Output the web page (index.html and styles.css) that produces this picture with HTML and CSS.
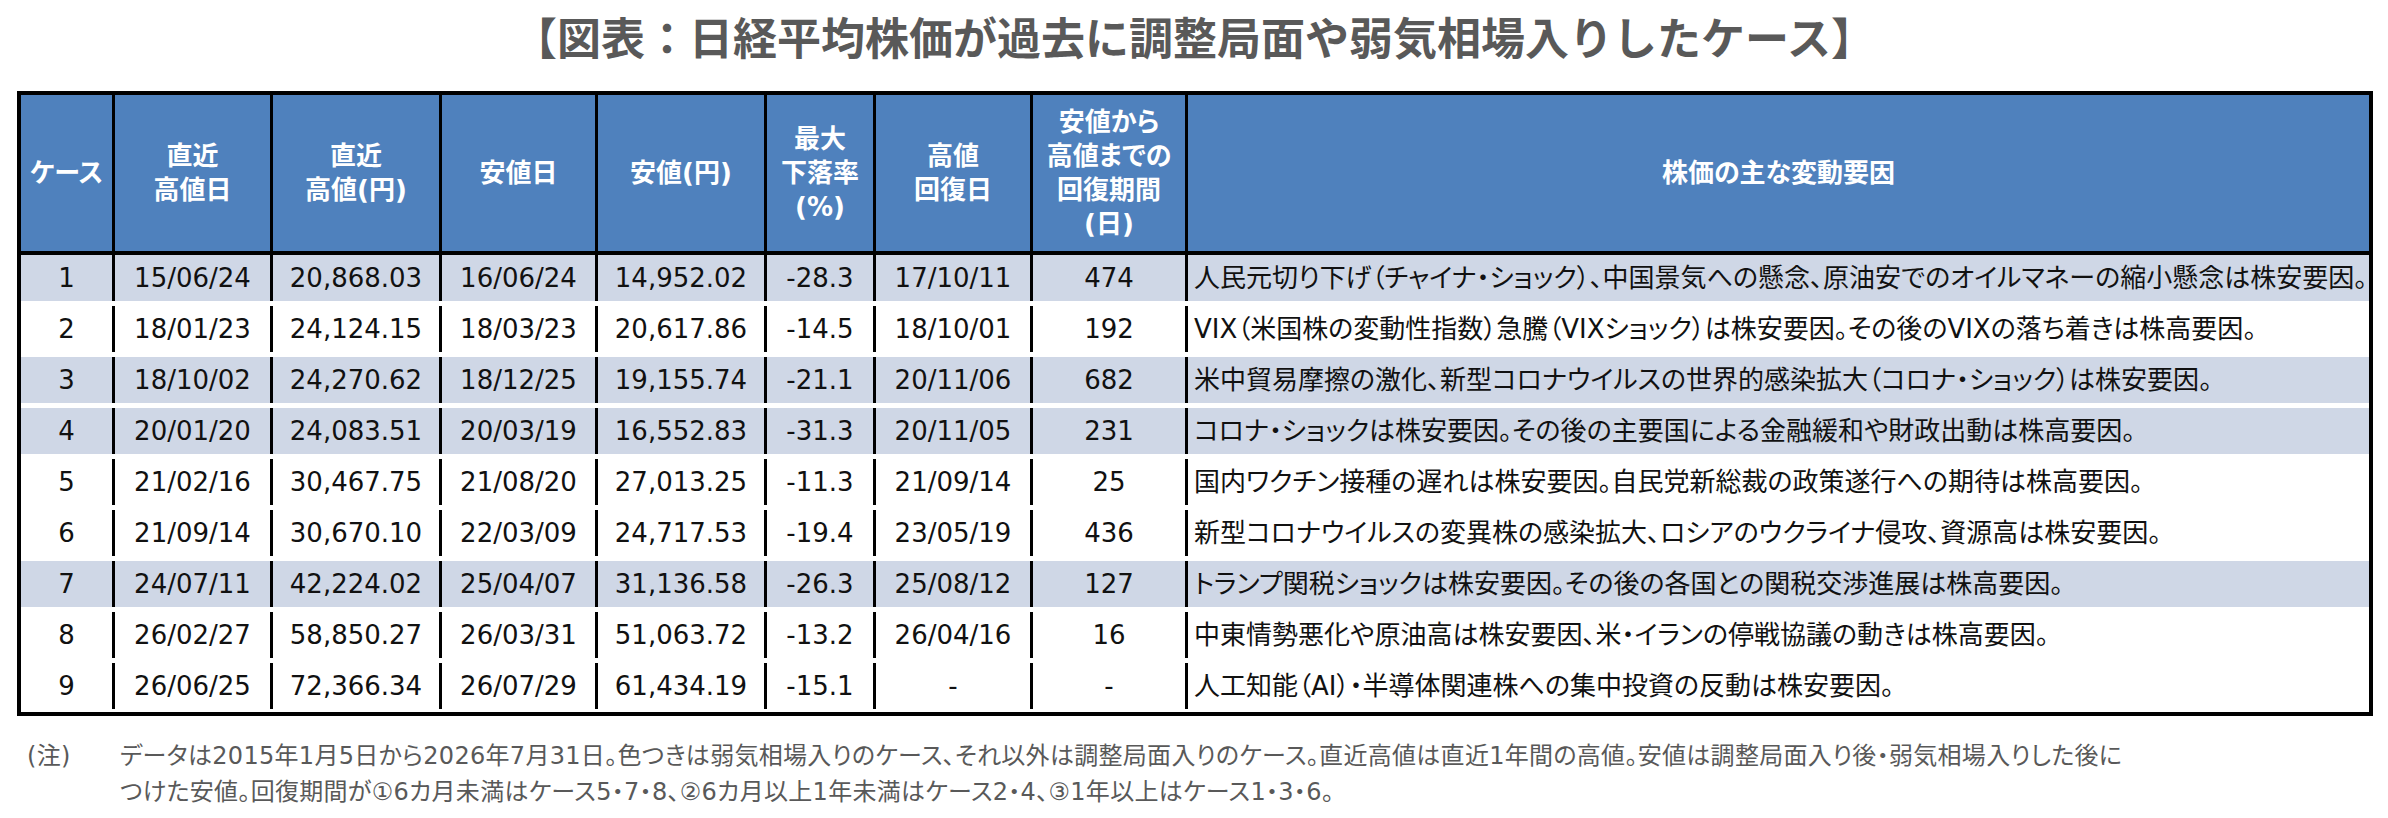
FILE: index.html
```html
<!DOCTYPE html>
<html lang="ja">
<head>
<meta charset="utf-8">
<title>日経平均株価が過去に調整局面や弱気相場入りしたケース</title>
<link rel="stylesheet" href="styles.css">
</head>
<body>
<div class="page">
  <h1 class="title">【図表：日経平均株価が過去に調整局面や弱気相場入りしたケース】</h1>
  <div class="table">
    <div class="row head">
      <div class="cell">ケース</div>
      <div class="cell">直近<br>高値日</div>
      <div class="cell">直近<br>高値(円)</div>
      <div class="cell">安値日</div>
      <div class="cell">安値(円)</div>
      <div class="cell">最大<br>下落率<br>(%)</div>
      <div class="cell">高値<br>回復日</div>
      <div class="cell">安値から<br>高値までの<br>回復期間<br>(日)</div>
      <div class="cell">株価の主な変動要因</div>
    </div>
    <div class="body">
      <div class="row band">
        <div class="cell">1</div><div class="cell">15/06/24</div><div class="cell">20,868.03</div><div class="cell">16/06/24</div><div class="cell">14,952.02</div><div class="cell">-28.3</div><div class="cell">17/10/11</div><div class="cell">474</div>
        <div class="cell desc">人民元切り下げ（チャイナ・ショック）、中国景気への懸念、原油安でのオイルマネーの縮小懸念は株安要因。</div>
      </div>
      <div class="row">
        <div class="cell">2</div><div class="cell">18/01/23</div><div class="cell">24,124.15</div><div class="cell">18/03/23</div><div class="cell">20,617.86</div><div class="cell">-14.5</div><div class="cell">18/10/01</div><div class="cell">192</div>
        <div class="cell desc">VIX（米国株の変動性指数）急騰（VIXショック）は株安要因。その後のVIXの落ち着きは株高要因。</div>
      </div>
      <div class="row band">
        <div class="cell">3</div><div class="cell">18/10/02</div><div class="cell">24,270.62</div><div class="cell">18/12/25</div><div class="cell">19,155.74</div><div class="cell">-21.1</div><div class="cell">20/11/06</div><div class="cell">682</div>
        <div class="cell desc">米中貿易摩擦の激化、新型コロナウイルスの世界的感染拡大（コロナ・ショック）は株安要因。</div>
      </div>
      <div class="row band">
        <div class="cell">4</div><div class="cell">20/01/20</div><div class="cell">24,083.51</div><div class="cell">20/03/19</div><div class="cell">16,552.83</div><div class="cell">-31.3</div><div class="cell">20/11/05</div><div class="cell">231</div>
        <div class="cell desc">コロナ・ショックは株安要因。その後の主要国による金融緩和や財政出動は株高要因。</div>
      </div>
      <div class="row">
        <div class="cell">5</div><div class="cell">21/02/16</div><div class="cell">30,467.75</div><div class="cell">21/08/20</div><div class="cell">27,013.25</div><div class="cell">-11.3</div><div class="cell">21/09/14</div><div class="cell">25</div>
        <div class="cell desc">国内ワクチン接種の遅れは株安要因。自民党新総裁の政策遂行への期待は株高要因。</div>
      </div>
      <div class="row">
        <div class="cell">6</div><div class="cell">21/09/14</div><div class="cell">30,670.10</div><div class="cell">22/03/09</div><div class="cell">24,717.53</div><div class="cell">-19.4</div><div class="cell">23/05/19</div><div class="cell">436</div>
        <div class="cell desc">新型コロナウイルスの変異株の感染拡大、ロシアのウクライナ侵攻、資源高は株安要因。</div>
      </div>
      <div class="row band">
        <div class="cell">7</div><div class="cell">24/07/11</div><div class="cell">42,224.02</div><div class="cell">25/04/07</div><div class="cell">31,136.58</div><div class="cell">-26.3</div><div class="cell">25/08/12</div><div class="cell">127</div>
        <div class="cell desc">トランプ関税ショックは株安要因。その後の各国との関税交渉進展は株高要因。</div>
      </div>
      <div class="row">
        <div class="cell">8</div><div class="cell">26/02/27</div><div class="cell">58,850.27</div><div class="cell">26/03/31</div><div class="cell">51,063.72</div><div class="cell">-13.2</div><div class="cell">26/04/16</div><div class="cell">16</div>
        <div class="cell desc">中東情勢悪化や原油高は株安要因、米・イランの停戦協議の動きは株高要因。</div>
      </div>
      <div class="row">
        <div class="cell">9</div><div class="cell">26/06/25</div><div class="cell">72,366.34</div><div class="cell">26/07/29</div><div class="cell">61,434.19</div><div class="cell">-15.1</div><div class="cell">-</div><div class="cell">-</div>
        <div class="cell desc">人工知能（AI）・半導体関連株への集中投資の反動は株安要因。</div>
      </div>
    </div>
  </div>
  <div class="note">
    <span class="note-label">(注)</span>
    <p class="note-text">データは2015年1月5日から2026年7月31日。色つきは弱気相場入りのケース、それ以外は調整局面入りのケース。直近高値は直近1年間の高値。安値は調整局面入り後・弱気相場入りした後に<br>つけた安値。回復期間が①6カ月未満はケース5・7・8、②6カ月以上1年未満はケース2・4、③1年以上はケース1・3・6。</p>
  </div>
</div>
</body>
</html>
```

FILE: styles.css
```css
* {
  box-sizing: border-box;
}

body {
  margin: 0;
  background: #ffffff;
  font-family: "DejaVu Sans", "Noto Sans CJK JP", sans-serif;
  color: #111111;
}

.page {
  width: 2388px;
}

.title {
  margin: 0;
  height: 91px;
  padding-top: 8px;
  text-align: center;
  font-family: "Noto Sans CJK JP", sans-serif;
  font-size: 44px;
  line-height: 56px;
  font-weight: 700;
  color: #595959;
}

.table {
  margin-left: 17px;
  width: 2356px;
  border: 4px solid #000000;
  background: #ffffff;
}

.row {
  display: grid;
  grid-template-columns: 91px 158px 169px 156px 169px 109px 157px 155px 1fr;
}

.cell {
  display: flex;
  align-items: center;
  justify-content: center;
  text-align: center;
  border-left: 3px solid #000000;
  white-space: nowrap;
  font-feature-settings: "palt";
}

.cell:first-child {
  border-left: none;
}

.head {
  height: 160px;
  background: #4f81bd;
  border-bottom: 4px solid #000000;
  color: #ffffff;
  font-weight: 700;
  font-size: 26px;
  line-height: 34px;
}

.body {
  display: flex;
  flex-direction: column;
  gap: 5px;
  padding-bottom: 3px;
}

.body .row {
  height: 46px;
  font-size: 26px;
  line-height: 1;
}

.band {
  background: #cfd7e6;
}

.desc {
  justify-content: flex-start;
  padding-left: 6px;
  text-align: left;
}

.note {
  display: flex;
  margin-top: 22px;
  font-size: 24px;
  line-height: 36px;
  color: #595959;
  letter-spacing: 0.3px;
  font-feature-settings: "palt";
}

.note-label {
  flex: none;
  width: 120px;
  padding-left: 27px;
}

.note-text {
  margin: 0;
}
```
